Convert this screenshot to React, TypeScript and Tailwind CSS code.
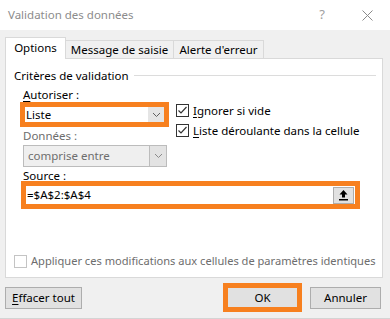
import React from 'react';

const Chevron = ({ color = '#606060' }: { color?: string }) => (
  <svg width="9" height="6" viewBox="0 0 9 6">
    <path d="M1 1 L4.5 4.5 L8 1" fill="none" stroke={color} strokeWidth="1" />
  </svg>
);

const CheckBox = ({ checked, disabled }: { checked?: boolean; disabled?: boolean }) => (
  <span
    className={`w-[13px] h-[13px] shrink-0 border bg-white flex items-center justify-center ${
      disabled ? 'border-[#c4c4c4]' : 'border-[#333333]'
    }`}
  >
    {checked && (
      <svg width="11" height="11" viewBox="0 0 11 11">
        <path d="M1.5 5.5 L4 8 L9.5 2" fill="none" stroke="#333333" strokeWidth="1.2" />
      </svg>
    )}
  </span>
);

const UploadIcon = () => (
  <svg width="11" height="12" viewBox="0 0 11 12">
    <path d="M5.5 1 L9.5 5.5 H7 V8.5 H4 V5.5 H1.5 Z" fill="#000" />
    <rect x="1" y="10" width="9" height="1.5" fill="#000" />
  </svg>
);

const App: React.FC = () => {
  return (
    <div
      className="w-[390px] h-[319px] bg-[#f0f0f0] flex flex-col overflow-hidden text-[11.5px] text-black whitespace-nowrap"
      style={{ fontFamily: '"Noto Sans", "Open Sans", sans-serif' }}
    >
      {/* title bar */}
      <div className="h-[30px] bg-white flex items-center pl-[8px] shrink-0">
        <span className="text-[11.5px] text-[#8c8c8c]">Validation des données</span>
        <span className="ml-auto text-[13px] text-[#a0a0a0] mr-[37px]">?</span>
        <svg width="11" height="11" viewBox="0 0 11 11" className="mr-[17px]">
          <path d="M0.5 0.5 L10.5 10.5 M10.5 0.5 L0.5 10.5" stroke="#8a8a8a" strokeWidth="1" />
        </svg>
      </div>

      {/* tabs */}
      <div className="mt-[7px] ml-[5px] flex items-end h-[21px] shrink-0">
        <div className="w-[61px] h-[22px] bg-white border border-b-0 border-[#d9d9d9] relative z-10 mb-[-1px] flex items-center justify-center pb-[1px]">
          Options
        </div>
        <div className="w-[108px] h-[18px] border-t border-r border-[#d9d9d9] flex items-center justify-center">
          Message de saisie
        </div>
        <div className="w-[90px] h-[18px] border-t border-r border-[#d9d9d9] flex items-center justify-center">
          Alerte d'erreur
        </div>
      </div>

      {/* tab panel */}
      <div className="ml-[5px] w-[378px] h-[220px] shrink-0 bg-white border border-[#d9d9d9] flex flex-col">
        <div className="mt-[9px] h-[15px] flex items-center pl-[8px] pr-[6px]">
          <span className="leading-[15px]">Critères de validation</span>
          <span className="flex-1 h-px bg-[#dcdcdc] ml-[5px]" />
        </div>

        <div className="mt-[5px] pl-[14px] flex">
          <div className="w-[149px] flex flex-col">
            <div className="h-[14px] leading-[14px] pl-[3px]">
              <span className="underline underline-offset-2">A</span>utoriser :
            </div>
            <div className="h-[25px] border-[5px] border-[#f7801f] flex bg-white">
              <span className="flex-1 leading-[15px] pl-[1px]">Liste</span>
              <span className="w-[16px] bg-[#e5e5e5] flex items-center justify-center">
                <Chevron />
              </span>
            </div>
            <div className="mt-[2px] h-[14px] leading-[14px] pl-[3px] text-[#6d6d6d]">Données :</div>
            <div className="mt-[2px] ml-[3px] w-[144px] h-[22px] border border-[#bcbcbc] bg-[#efefef] flex">
              <span className="flex-1 leading-[20px] pl-[4px] text-[#6d6d6d]">comprise entre</span>
              <span className="w-[17px] bg-[#e3e3e3] border-l border-[#bcbcbc] flex items-center justify-center">
                <Chevron color="#8a8a8a" />
              </span>
            </div>
          </div>

          <div className="ml-[7px] mt-[16px] flex flex-col gap-[7px]">
            <label className="flex items-center h-[13px] gap-[4px]">
              <CheckBox checked />
              <span>
                <span className="underline underline-offset-2">I</span>gnorer si vide
              </span>
            </label>
            <label className="flex items-center h-[13px] gap-[4px]">
              <CheckBox checked />
              <span>
                <span className="underline underline-offset-2">L</span>iste déroulante dans la cellule
              </span>
            </label>
          </div>
        </div>

        <div className="mt-[2px] h-[12px] leading-[14px] pl-[17px]">
          <span className="underline underline-offset-2">S</span>ource :
        </div>
        <div className="ml-[15px] w-[339px] h-[28px] border-[5px] border-[#f7801f] bg-white flex items-center">
          <span className="flex-1 pl-[1px] leading-[18px]">=$A$2:$A$4</span>
          <span className="w-[21px] h-[17px] mr-[1px] border border-[#adadad] bg-[#e1e1e1] flex items-center justify-center">
            <UploadIcon />
          </span>
        </div>

        <div className="mt-[46px] pl-[8px] flex items-center h-[13px] gap-[4px] text-[#6d6d6d] text-[11.1px]">
          <CheckBox disabled />
          <span>Appliquer ces modifications aux cellules de paramètres identiques</span>
        </div>
      </div>

      {/* buttons */}
      <div className="mt-[5px] h-[29px] px-[5px] flex items-center shrink-0">
        <button className="w-[77px] h-[22px] border border-[#adadad] bg-[#e1e1e1] flex items-center justify-center">
          <span>
            <span className="underline underline-offset-2">E</span>ffacer tout
          </span>
        </button>
        <div className="ml-auto w-[79px] h-[29px] border-[5px] border-[#f7801f] bg-[#e1e1e1] flex items-center justify-center">
          OK
        </div>
        <button className="ml-[8px] mr-[4px] w-[71px] h-[22px] border border-[#adadad] bg-[#e1e1e1] flex items-center justify-center">
          Annuler
        </button>
      </div>

      <div className="mt-auto h-px bg-[#d4d4d4] shrink-0" />
    </div>
  );
};

export default App;
